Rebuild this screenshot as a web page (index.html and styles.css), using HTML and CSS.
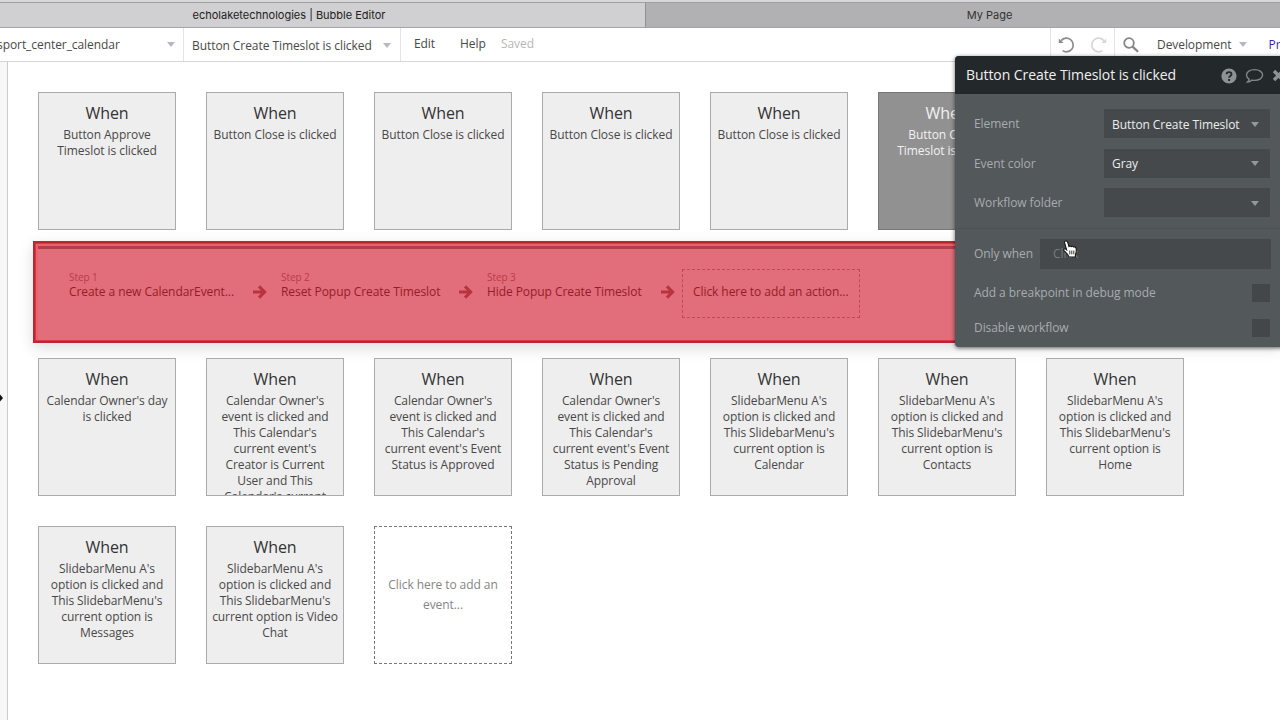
FILE: index.html
```html
<!DOCTYPE html>
<html lang="en">
<head>
    <meta charset="UTF-8">
    <meta name="viewport" content="width=device-width, initial-scale=1.0">
    <title>echolaketechnologies | Bubble Editor</title>
    <link rel="stylesheet" href="styles.css">
</head>
<body>
    <div class="tabs">
        <div class="tab active"><span>echolaketechnologies | Bubble Editor</span></div>
        <div class="tab other"><span>My Page</span></div>
    </div>
    <header class="toolbar">
        <div class="picker page"><span>sport_center_calendar</span><i class="caret"></i></div>
        <div class="picker event"><span>Button Create Timeslot is clicked</span><i class="caret"></i></div>
        <nav class="menu">
            <span class="edit">Edit</span>
            <span class="help">Help</span>
            <span class="saved">Saved</span>
        </nav>
        <div class="history">
            <svg width="18" height="18" viewBox="0 0 18 18"><path d="M3.2 4.6A6.8 6.8 0 1 1 4.6 14.6" fill="none" stroke="#8b8b8b" stroke-width="1.7"/><path d="M.8 2.4V7h4.8z" fill="#8b8b8b"/></svg>
            <svg width="18" height="18" viewBox="0 0 18 18"><path d="M14.8 4.6A6.8 6.8 0 1 0 13.4 14.6" fill="none" stroke="#d6d6d6" stroke-width="1.7"/><path d="M17.2 2.4V7h-4.8z" fill="#d6d6d6"/></svg>
        </div>
        <div class="right">
            <svg width="18" height="18" viewBox="0 0 18 18"><circle cx="7" cy="7" r="4.8" fill="none" stroke="#858585" stroke-width="1.8"/><path d="M10.6 10.6l5.4 5.2" stroke="#858585" stroke-width="2.2"/></svg>
            <span class="version">Development</span><i class="caret"></i>
            <span class="preview">Preview</span>
        </div>
    </header>
    <main>
        <aside class="rail"><svg width="6" height="10" viewBox="0 0 6 10"><path d="M-2 5h4M0 1.5L3 5L0 8.5z" fill="#111"/></svg></aside>
        <section class="canvas">
            <div class="row">
                <div class="card"><h2>When</h2><p>Button Approve Timeslot is clicked</p></div>
                <div class="card"><h2>When</h2><p>Button Close is clicked</p></div>
                <div class="card"><h2>When</h2><p>Button Close is clicked</p></div>
                <div class="card"><h2>When</h2><p>Button Close is clicked</p></div>
                <div class="card"><h2>When</h2><p>Button Close is clicked</p></div>
                <div class="card selected"><h2>When</h2><p>Button Create<br>Timeslot is clicked</p></div>
            </div>
            <div class="actions">
                <div class="step one"><small>Step 1</small><span>Create a new CalendarEvent...</span></div>
                <svg class="arrow" width="14" height="14" viewBox="0 0 14 14"><path d="M0 7h11M6 1.4L11.6 7L6 12.6" fill="none" stroke="#b9343f" stroke-width="3.1"/></svg>
                <div class="step two"><small>Step 2</small><span>Reset Popup Create Timeslot</span></div>
                <svg class="arrow" width="14" height="14" viewBox="0 0 14 14"><path d="M0 7h11M6 1.4L11.6 7L6 12.6" fill="none" stroke="#b9343f" stroke-width="3.1"/></svg>
                <div class="step three"><small>Step 3</small><span>Hide Popup Create Timeslot</span></div>
                <svg class="arrow" width="14" height="14" viewBox="0 0 14 14"><path d="M0 7h11M6 1.4L11.6 7L6 12.6" fill="none" stroke="#b9343f" stroke-width="3.1"/></svg>
                <div class="add-action">Click here to add an action...</div>
            </div>
            <div class="row">
                <div class="card"><h2>When</h2><p>Calendar Owner's day is clicked</p></div>
                <div class="card"><h2>When</h2><p>Calendar Owner's event is clicked and<br>This Calendar's<br>current event's<br>Creator is Current<br>User and This<br>Calendar's current</p></div>
                <div class="card"><h2>When</h2><p>Calendar Owner's event is clicked and<br>This Calendar's<br>current event's Event Status is Approved</p></div>
                <div class="card"><h2>When</h2><p>Calendar Owner's event is clicked and<br>This Calendar's<br>current event's Event Status is Pending Approval</p></div>
                <div class="card"><h2>When</h2><p>SlidebarMenu A's option is clicked and This SlidebarMenu's current option is Calendar</p></div>
                <div class="card"><h2>When</h2><p>SlidebarMenu A's option is clicked and This SlidebarMenu's current option is Contacts</p></div>
                <div class="card"><h2>When</h2><p>SlidebarMenu A's option is clicked and This SlidebarMenu's current option is Home</p></div>
            </div>
            <div class="row">
                <div class="card"><h2>When</h2><p>SlidebarMenu A's option is clicked and This SlidebarMenu's current option is Messages</p></div>
                <div class="card"><h2>When</h2><p>SlidebarMenu A's option is clicked and This SlidebarMenu's current option is Video Chat</p></div>
                <div class="card add-event">Click here to add an event...</div>
            </div>
        </section>
    </main>

    <div class="panel">
        <div class="panel-head">
            <h3>Button Create Timeslot is clicked</h3>
            <svg width="16" height="16" viewBox="0 0 16 16"><circle cx="8" cy="8" r="7.6" fill="#8d9395"/><path d="M5.6 6.2C5.7 3.4 10.5 3.4 10.5 6.2C10.5 8 8.1 8 8.1 9.8" fill="none" stroke="#23282a" stroke-width="1.9"/><rect x="7.1" y="11" width="2" height="2" fill="#23282a"/></svg>
            <svg width="19" height="16" viewBox="0 0 19 16"><path d="M9.6 1.6c4.6 0 8 2.3 8 5.4s-3.4 5.4-8 5.4c-.9 0-1.7-.1-2.5-.3-1.2 1.2-2.9 2-4.6 2 1-.9 1.5-1.9 1.6-3C2.4 10.1 1.5 8.7 1.5 7c0-3.1 3.5-5.4 8.1-5.4z" fill="none" stroke="#80878a" stroke-width="1.4"/></svg>
            <svg width="14" height="14" viewBox="0 0 14 14"><path d="M2 2l9 9M11 2l-9 9" stroke="#8d9395" stroke-width="3.4"/></svg>
        </div>
        <div class="panel-body">
            <div class="field"><label>Element</label><div class="select">Button Create Timeslot<i class="caret"></i></div></div>
            <div class="field"><label>Event color</label><div class="select">Gray<i class="caret"></i></div></div>
            <div class="field"><label>Workflow folder</label><div class="select"><i class="caret"></i></div></div>
            <div class="condition"><label>Only when</label><div class="expression"><span>Click</span></div></div>
            <div class="check"><label>Add a breakpoint in debug mode</label><i class="box"></i></div>
            <div class="check last"><label>Disable workflow</label><i class="box"></i></div>
        </div>
    </div>
    <svg class="cursor" width="16" height="19" viewBox="0 0 15 18"><path d="M3.3 1C4.6.6 5.2 1.5 5.5 2.6l1 3.6c.8-.8 1.8-.7 2.2.1.9-.7 1.9-.4 2.2.4 1-.5 2.2 0 2.4 1.3.3 2 .2 3.8-.6 5.5l-.2 2.6H6.600C5.700 13.800 3.700 12 2 10.200 1 8.900 2.200 7.800 3.400 8.500l.9.700L2.400 2.800C2.200 1.900 2.500 1.200 3.300 1z" fill="#fff" stroke="#111" stroke-width="1"/><path d="M7.3 10v3.6M9.2 10v3.6M11.1 10v3.6" stroke="#111" stroke-width=".8"/></svg>
</body>
</html>
```

FILE: styles.css
```css
* {
    margin: 0;
    padding: 0;
    box-sizing: border-box;
}
body {
    width: 1280px;
    height: 720px;
    overflow: hidden;
    position: relative;
    background: #fff;
    color: #484848;
    font-family: "Open Sans", "Noto Sans", sans-serif;
    font-size: 12px;
    letter-spacing: -0.07px;
}
svg {
    display: block;
    flex-shrink: 0;
}
.tabs {
    display: flex;
    height: 28px;
    padding-top: 2px;
    background: #d8d6d8;
}
.tab {
    display: flex;
    justify-content: center;
    align-items: center;
    border-top: 1px solid #a09fa1;
    border-bottom: 1px solid #a5a4a6;
    font-family: Inter, sans-serif;
    font-size: 11px;
    letter-spacing: 0;
}
.active {
    width: 645px;
    padding-right: 67px;
    background: #d0cfd1;
    color: #222;
}
.other {
    flex: 1;
    padding-left: 53px;
    border-left: 1px solid #929193;
    background: #b1b0b2;
    color: #333;
}
.toolbar {
    display: flex;
    height: 34px;
    border-bottom: 1px solid #d5d5d5;
    line-height: 32px;
    white-space: nowrap;
}
.caret {
    flex-shrink: 0;
    width: 0;
    border: 4px solid transparent;
    border-top: 5px solid #b4bac0;
    border-bottom: 0;
}
.picker {
    display: flex;
    justify-content: space-between;
    align-items: center;
    border-right: 1px solid #e4e4e4;
}
.page {
    width: 184px;
    padding-right: 8px;
}
.page span {
    margin-left: -3px;
}
.event {
    width: 217px;
    padding: 2px 9px 0 8px;
}
.menu {
    display: flex;
    flex: 1;
    padding-left: 13px;
}
.edit {
    width: 46px;
}
.help {
    width: 41px;
}
.saved {
    color: #b7b7b7;
}
.history {
    display: flex;
    align-items: center;
    gap: 13px;
    width: 65px;
    padding-left: 7px;
    border: solid #e4e4e4;
    border-width: 0 1px;
}
.right {
    display: flex;
    align-items: center;
    width: 165px;
    padding-left: 7px;
}
.version {
    margin: 0 8px 0 17px;
}
.preview {
    margin-left: 21px;
    color: #3a1fb0;
}
main {
    display: flex;
    height: 658px;
}
.rail {
    display: flex;
    align-items: center;
    width: 8px;
    padding-top: 14px;
    border-right: 1px solid #ccc;
    background: #f7f7f7;
}
.canvas {
    flex: 1;
    padding-top: 30px;
}
.row {
    display: flex;
    gap: 30px;
    height: 138px;
    margin: 0 0 30px 30px;
}
.card {
    width: 138px;
    padding: 8px 4px 0;
    border: 1px solid #a9abad;
    background: #eee;
    text-align: center;
    line-height: 15.9px;
    overflow: hidden;
}
.card h2 {
    height: 26.3px;
    color: #333;
    font-size: 16px;
    font-weight: 400;
    line-height: 25px;
}
.selected, .selected h2 {
    background: #919191;
    color: #f1f1f1;
}
.selected {
    border-color: #777;
}
.card.add-event {
    padding: 48px 8px 0;
    border: 1px dashed #777;
    background: #fff;
    color: #858585;
    line-height: 20px;
}
.actions {
    display: flex;
    align-items: flex-start;
    height: 102px;
    margin: -19px 0 15px 25px;
    padding: 24px 0 0 34px;
    border: 2px solid #b92733;
    box-shadow: inset 0 0 0 1px #df3541, inset 3px 3px 0 0 #e8626f, inset 0 6px 0 0 #b63e49, 0 5px 14px rgba(0, 0, 0, .14);
    background: #e16e7a;
    color: #961c29;
    white-space: nowrap;
}
.step small {
    display: block;
    height: 15px;
    color: #bc3c48;
    font-size: 10px;
    line-height: 20px;
}
.step span {
    line-height: 20px;
}
.one {
    width: 184px;
}
.two {
    width: 178px;
}
.three {
    width: 174px;
}
.arrow {
    margin: 18px 14px 0 0;
}
.add-action {
    width: 178px;
    height: 49px;
    margin-left: -7px;
    margin-top: 2px;
    padding-left: 10px;
    border: 1px dashed #c44854;
    line-height: 43px;
}
.panel {
    position: absolute;
    left: 955px;
    top: 56px;
    width: 340px;
    height: 291px;
    border-radius: 4px;
    background: #53585b;
    box-shadow: 0 1px 4px rgba(0, 0, 0, .6);
    color: #a8acae;
    overflow: hidden;
}
.panel-head {
    display: flex;
    align-items: center;
    height: 38px;
    padding-left: 11px;
    background: #23282a;
}
.panel-head h3 {
    width: 255px;
    color: #f0f0f0;
    font-size: 14px;
    font-weight: 400;
    line-height: 18px;
}
.panel-head svg {
    margin: 1px 8px 0 0;
}
.panel-body {
    padding: 15px 0 0 19px;
}
.field {
    display: flex;
    height: 39.5px;
    line-height: 29px;
}
.field label {
    width: 130px;
}
.select {
    display: flex;
    justify-content: space-between;
    align-items: center;
    width: 166px;
    height: 29px;
    padding: 1px 11px 0 8px;
    background: #45494b;
    color: #eceded;
}
.select .caret {
    margin-left: auto;
    border-top-color: #92989b;
}
.condition {
    display: flex;
    margin-left: -19px;
    padding: 10px 0 0 19px;
    border-top: 1px solid #4c5154;
    line-height: 29px;
}
.condition label {
    width: 66px;
}
.expression {
    width: 231px;
    height: 30px;
    padding-left: 13px;
    background: #45494b;
    color: #777c7e;
}
.check {
    display: flex;
    justify-content: space-between;
    align-items: center;
    width: 296px;
    height: 35px;
    margin-top: 6px;
}
.last {
    margin-top: 0;
}
.box {
    width: 18px;
    height: 18px;
    margin-top: 2px;
    background: #434749;
}
.cursor {
    position: absolute;
    left: 1062px;
    top: 240px;
}
```
